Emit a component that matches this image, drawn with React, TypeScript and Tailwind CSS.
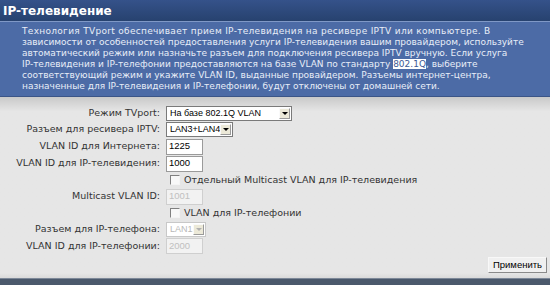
import React from 'react';

const vf = { fontFamily: '"DejaVu Sans", Verdana, sans-serif' };
const tf = { fontFamily: '"Liberation Sans", Tahoma, Arial, sans-serif' };

const Arrow: React.FC<{ disabled?: boolean }> = ({ disabled }) => (
  <div className="my-[1px] mr-[1px] flex h-[11px] w-[11px] items-center justify-center border border-t-[#fafafa] border-l-[#fafafa] border-r-[#9a9a9a] border-b-[#9a9a9a] bg-[#ece9d8]">
    <svg width="6" height="3" viewBox="0 0 6 3">
      <path d="M0 0h6L3 3z" fill={disabled ? '#b0b0b0' : '#000'} />
    </svg>
  </div>
);

const Select: React.FC<{ value: string; width: string; disabled?: boolean }> = ({ value, width, disabled }) => (
  <div
    className={`flex h-[15px] items-center border bg-white ${width} ${disabled ? 'border-[#c8c8c8] text-[#b8b8b8]' : 'border-[#7a7a7a] text-black'}`}
  >
    <span className="flex-1 whitespace-nowrap pl-[3px] text-[9px] leading-none" style={tf}>
      {value}
    </span>
    <Arrow disabled={disabled} />
  </div>
);

const Input: React.FC<{ value: string; disabled?: boolean }> = ({ value, disabled }) => (
  <div
    className={`flex h-[16px] w-[37px] items-center border pl-[2px] text-[9.5px] ${
      disabled ? 'border-[#cfcfcf] bg-[#f2f2f2] text-[#c0c0c0]' : 'border-[#9a9a9a] bg-white text-black'
    }`}
    style={tf}
  >
    {value}
  </div>
);

const Row: React.FC<{ label?: string; h: string; children: React.ReactNode }> = ({ label, h, children }) => (
  <div className={`flex items-center ${h}`}>
    <div className="w-[163px] whitespace-nowrap pr-[3px] text-right text-[9.5px] text-[#333]" style={vf}>
      {label}
    </div>
    <div className="pl-[3px]">{children}</div>
  </div>
);

const Check: React.FC<{ label: string }> = ({ label }) => (
  <div className="flex items-center pl-[4px]">
    <div className="h-[10px] w-[10px] border border-l-[#808080] border-t-[#808080] border-r-[#f4f4f4] border-b-[#f4f4f4] bg-[#f8f8f8]" />
    <span className="whitespace-nowrap pl-[4px] text-[9.5px] text-[#333]" style={vf}>
      {label}
    </span>
  </div>
);

export default function App() {
  return (
    <div className="flex h-[285px] w-[550px] flex-col overflow-hidden bg-[#e7e7e7]">
      <div className="flex h-[21px] items-center bg-gradient-to-b from-[#35528a] to-[#27426f] pl-[3px]">
        <span className="text-[12px] font-bold text-white" style={vf}>
          IP-телевидение
        </span>
      </div>
      <div
        className="h-[76px] whitespace-nowrap border-t border-b border-t-[#7f98c6] border-b-[#3b5587] bg-[#4c6ba6] pl-[22px] pt-[4px] text-[9px] leading-[11px] text-[#e8eef8]"
        style={vf}
      >
        <div className="tracking-[0.3px]">
          Технология TVport обеспечивает прием IP-телевидения на ресивере IPTV или компьютере. В
        </div>
        <div>зависимости от особенностей предоставления услуги IP-телевидения вашим провайдером, используйте</div>
        <div>автоматический режим или назначьте разъем для подключения ресивера IPTV вручную. Если услуга</div>
        <div>
          IP-телевидения и IP-телефонии предоставляются на базе VLAN по стандарту{' '}
          <span className="bg-white text-[#3d5a94]">802.1Q</span>, выберите
        </div>
        <div>соответствующий режим и укажите VLAN ID, выданные провайдером. Разъемы интернет-центра,</div>
        <div>назначенные для IP-телевидения и IP-телефонии, будут отключены от домашней сети.</div>
      </div>
      <div className="flex flex-1 flex-col bg-gradient-to-b from-[#c9c9c9] via-[#e6e6e6] via-[8%] to-[#e6e6e6] pt-[9px]">
        <Row label="Режим TVport:" h="h-[15px]">
          <Select value="На базе 802.1Q VLAN" width="w-[126px]" />
        </Row>
        <Row label="Разъем для ресивера IPTV:" h="h-[17px]">
          <Select value="LAN3+LAN4" width="w-[67px]" />
        </Row>
        <Row label="VLAN ID для Интернета:" h="h-[17px]">
          <Input value="1225" />
        </Row>
        <Row label="VLAN ID для IP-телевидения:" h="h-[17px]">
          <Input value="1000" />
        </Row>
        <Row h="h-[16px]">
          <Check label="Отдельный Multicast VLAN для IP-телевидения" />
        </Row>
        <Row label="Multicast VLAN ID:" h="h-[17px]">
          <Input value="1001" disabled />
        </Row>
        <Row h="h-[16px]">
          <Check label="VLAN для IP-телефонии" />
        </Row>
        <Row label="Разъем для IP-телефона:" h="h-[17px]">
          <Select value="LAN1" width="w-[40px]" disabled />
        </Row>
        <Row label="VLAN ID для IP-телефонии:" h="h-[16px]">
          <Input value="2000" disabled />
        </Row>
        <div className="flex justify-end pr-[3px] pt-[3px]">
          <button
            className="flex h-[16px] w-[59px] items-center justify-center border border-t-[#f8f8f8] border-l-[#f8f8f8] border-r-[#8a8a8a] border-b-[#8a8a8a] bg-[#f0f0f0] text-[9.5px] text-black"
            style={tf}
          >
            Применить
          </button>
        </div>
        <div className="flex-1 bg-gradient-to-b from-[#e6e6e6] to-[#dadada]" />
      </div>
      <div className="h-[7px] border-t border-[#7d8898] bg-[#4b596c]" />
    </div>
  );
}
